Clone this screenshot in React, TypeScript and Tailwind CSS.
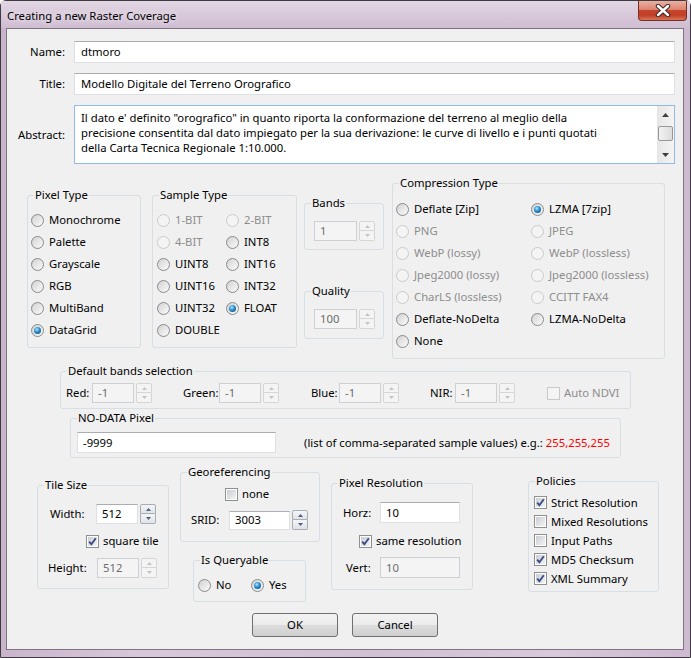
import React from 'react';

const FONT = "font-['Segoe_UI','Noto_Sans',sans-serif]";

function Radio({ label, checked = false, disabled = false }: { label: string; checked?: boolean; disabled?: boolean }) {
  return (
    <div className="flex items-center h-[22px] whitespace-nowrap">
      <span
        className={`w-[13px] h-[13px] shrink-0 rounded-full border flex items-center justify-center ${
          disabled ? 'border-[#cacaca] bg-[#f4f4f4]' : 'border-[#8a8a8a] bg-[linear-gradient(135deg,#d2d2d2,#fbfbfb)]'
        }`}
      >
        {checked && (
          <span className="w-[7px] h-[7px] rounded-full bg-[radial-gradient(circle_at_40%_35%,#a6e8ff_0%,#2a8bcc_45%,#0b3f72_100%)]" />
        )}
      </span>
      <span className={`ml-[5px] ${disabled ? 'text-[#8d8d8d]' : 'text-black'}`}>{label}</span>
    </div>
  );
}

function Check({ label, checked = false, disabled = false }: { label: string; checked?: boolean; disabled?: boolean }) {
  return (
    <div className="flex items-center whitespace-nowrap">
      <span
        className={`w-[13px] h-[13px] shrink-0 border p-[1px] ${
          disabled ? 'border-[#c9c9c9] bg-[#f4f4f4]' : 'border-[#8e8f8f] bg-white'
        }`}
      >
        <span
          className={`flex items-center justify-center w-full h-full ${
            disabled ? 'bg-[#f4f4f4]' : 'bg-[linear-gradient(135deg,#c9cdd2,#f3f3f4)]'
          }`}
        >
          {checked && (
            <svg width="9" height="9" viewBox="0 0 9 9">
              <path d="M1.2 4.6 L3.4 7.2 L7.8 1.3" fill="none" stroke="#3b4d85" strokeWidth="1.9" />
            </svg>
          )}
        </span>
      </span>
      <span className={`ml-[4px] ${disabled ? 'text-[#8d8d8d]' : 'text-black'}`}>{label}</span>
    </div>
  );
}

function Spin({ disabled = false }: { disabled?: boolean }) {
  const arrow = disabled ? '#c4c4c4' : '#4d6185';
  const half = disabled
    ? 'border-[#d6d6d6] bg-[#f4f4f4]'
    : 'border-[#a6adb6] bg-[linear-gradient(#f6f6f6,#dfe2e6)]';
  return (
    <div className="flex flex-col w-[16px] h-[20px] ml-[2px] shrink-0">
      <div className={`h-[10px] border rounded-t-[2px] flex items-center justify-center ${half}`}>
        <svg width="5" height="3" viewBox="0 0 5 3">
          <path d="M0 3 L2.5 0 L5 3Z" fill={arrow} />
        </svg>
      </div>
      <div className={`h-[10px] border border-t-0 rounded-b-[2px] flex items-center justify-center ${half}`}>
        <svg width="5" height="3" viewBox="0 0 5 3">
          <path d="M0 0 L2.5 3 L5 0Z" fill={arrow} />
        </svg>
      </div>
    </div>
  );
}

function Field({ value, disabled = false, className = '' }: { value: string; disabled?: boolean; className?: string }) {
  return (
    <div
      className={`border flex items-center pl-[5px] whitespace-nowrap overflow-hidden shrink-0 ${
        disabled
          ? 'border-[#cdd1d5] bg-[#f4f4f4] text-[#6d6d6d]'
          : 'border-[#dde0e5] border-t-[#abadb3] bg-white text-black'
      } ${className}`}
    >
      {value}
    </div>
  );
}

function Group({
  title,
  className,
  children,
}: {
  title: string;
  className: string;
  children?: React.ReactNode;
}) {
  return (
    <fieldset className={`border border-[#d5dfe5] rounded-[3px] min-w-0 shrink-0 ${className}`}>
      <legend className="ml-[6px] px-[1px] leading-[16px] text-black">{title}</legend>
      {children}
    </fieldset>
  );
}

export default function App() {
  return (
    <div className={`${FONT} text-[11.3px] leading-[16px] w-[691px] h-[658px] overflow-hidden`}>
      <div className="w-[691px] h-[658px] border border-[#3d3a40] rounded-t-[6px] flex flex-col bg-[linear-gradient(90deg,#c9b4cc_0%,#d8c8da_20%,#d2c0d4_55%,#d9c9db_80%,#cdb9d0_100%)]">
        {/* Title bar */}
        <div className="h-[27px] flex items-start justify-between bg-[linear-gradient(180deg,#e2d7e4_0%,#d6c6d8_60%,#cfbdd2_100%)]">
          <div className="mt-[7px] ml-[6px] leading-[16px] text-black [text-shadow:0_0_6px_#ffffff]">
            Creating a new Raster Coverage
          </div>
          <div className="w-[49px] h-[20px] mr-[3px] rounded-b-[4px] border border-t-0 border-[#7a2e22] flex items-center justify-center bg-[linear-gradient(180deg,#eab0a2_0%,#dc8470_45%,#c6442b_50%,#c13f26_75%,#d87656_100%)]">
            <svg width="16" height="13" viewBox="0 0 16 13">
              <path d="M3 2 L13 11 M13 2 L3 11" stroke="#3a2a2a" strokeWidth="4.4" strokeLinecap="round" />
              <path d="M3 2 L13 11 M13 2 L3 11" stroke="#ffffff" strokeWidth="2.4" strokeLinecap="round" />
            </svg>
          </div>
        </div>

        {/* Client area */}
        <div className="ml-[5px] mr-[6px] mb-[7px] flex-1 border border-[#7d7480] bg-[#f0f0f0] flex flex-col">
          {/* Name / Title / Abstract */}
          <div className="grid grid-cols-[58px_1fr] gap-x-[9px] gap-y-[10px] pt-[12px] pr-[8px] items-center">
            <div className="text-right">Name:</div>
            <Field value="dtmoro" className="h-[22px] pl-[6px]" />
            <div className="text-right">Title:</div>
            <Field value="Modello Digitale del Terreno Orografico" className="h-[22px] pl-[6px]" />
            <div className="text-right">Abstract:</div>
            <div className="h-[59px] border border-[#8fbbe6] bg-white flex">
              <div className="flex-1 min-w-0 pl-[6px] pt-[4px] leading-[15px] whitespace-nowrap overflow-hidden">
                <div>Il dato e' definito "orografico" in quanto riporta la conformazione del terreno al meglio della</div>
                <div>precisione consentita dal dato impiegato per la sua derivazione: le curve di livello e i punti quotati</div>
                <div>della Carta Tecnica Regionale 1:10.000.</div>
              </div>
              <div className="w-[17px] flex flex-col items-center bg-[linear-gradient(90deg,#e6e6e6,#f4f4f4)]">
                <div className="h-[17px] flex items-center justify-center">
                  <svg width="7" height="4" viewBox="0 0 7 4">
                    <path d="M0 4 L3.5 0 L7 4Z" fill="#404040" />
                  </svg>
                </div>
                <div className="flex-1 w-full flex items-center justify-center">
                  <div className="w-[15px] h-[15px] mt-[-3px] rounded-[2px] border border-[#979797] bg-[linear-gradient(90deg,#f2f2f2,#dcdcdc)]" />
                </div>
                <div className="h-[17px] flex items-center justify-center">
                  <svg width="7" height="4" viewBox="0 0 7 4">
                    <path d="M0 0 L3.5 4 L7 0Z" fill="#404040" />
                  </svg>
                </div>
              </div>
            </div>
          </div>

          {/* Types row */}
          <div className="flex items-start mt-[11px] pl-[20px]">
            <Group title="Pixel Type" className="w-[114px] h-[161px] mt-[12px]">
              <div className="pt-[6px] pl-[3px]">
                <Radio label="Monochrome" />
                <Radio label="Palette" />
                <Radio label="Grayscale" />
                <Radio label="RGB" />
                <Radio label="MultiBand" />
                <Radio label="DataGrid" checked />
              </div>
            </Group>
            <Group title="Sample Type" className="w-[145px] h-[161px] mt-[12px] ml-[11px]">
              <div className="pt-[6px] pl-[4px] grid grid-cols-[69px_auto]">
                <Radio label="1-BIT" disabled />
                <Radio label="2-BIT" disabled />
                <Radio label="4-BIT" disabled />
                <Radio label="INT8" />
                <Radio label="UINT8" />
                <Radio label="INT16" />
                <Radio label="UINT16" />
                <Radio label="INT32" />
                <Radio label="UINT32" />
                <Radio label="FLOAT" checked />
                <Radio label="DOUBLE" />
              </div>
            </Group>
            <div className="flex flex-col ml-[7px] mt-[20px]">
              <Group title="Bands" className="w-[80px] h-[55px]">
                <div className="flex items-start pt-[10px] pl-[9px]">
                  <Field value="1" disabled className="w-[43px] h-[20px]" />
                  <Spin disabled />
                </div>
              </Group>
              <Group title="Quality" className="w-[80px] h-[56px] mt-[33px]">
                <div className="flex items-start pt-[10px] pl-[9px]">
                  <Field value="100" disabled className="w-[43px] h-[20px]" />
                  <Spin disabled />
                </div>
              </Group>
            </div>
            <Group title="Compression Type" className="w-[273px] h-[184px] ml-[8px]">
              <div className="pt-[7px] pl-[3px] grid grid-cols-[135px_auto]">
                <Radio label="Deflate [Zip]" />
                <Radio label="LZMA [7zip]" checked />
                <Radio label="PNG" disabled />
                <Radio label="JPEG" disabled />
                <Radio label="WebP (lossy)" disabled />
                <Radio label="WebP (lossless)" disabled />
                <Radio label="Jpeg2000 (lossy)" disabled />
                <Radio label="Jpeg2000 (lossless)" disabled />
                <Radio label="CharLS (lossless)" disabled />
                <Radio label="CCITT FAX4" disabled />
                <Radio label="Deflate-NoDelta" />
                <Radio label="LZMA-NoDelta" />
                <Radio label="None" />
              </div>
            </Group>
          </div>

          {/* Default bands selection */}
          <Group title="Default bands selection" className="w-[571px] h-[46px] mt-[4px] ml-[53px]">
            <div className="flex items-center pt-[4px] pl-[5px]">
              <div className="w-[117px] flex items-center">
                <span className="w-[26px] shrink-0">Red:</span>
                <Field value="-1" disabled className="w-[42px] h-[20px]" />
                <Spin disabled />
              </div>
              <div className="w-[128px] flex items-center">
                <span className="w-[36px] shrink-0">Green:</span>
                <Field value="-1" disabled className="w-[42px] h-[20px]" />
                <Spin disabled />
              </div>
              <div className="w-[119px] flex items-center">
                <span className="w-[28px] shrink-0">Blue:</span>
                <Field value="-1" disabled className="w-[42px] h-[20px]" />
                <Spin disabled />
              </div>
              <div className="w-[117px] flex items-center">
                <span className="w-[25px] shrink-0">NIR:</span>
                <Field value="-1" disabled className="w-[42px] h-[20px]" />
                <Spin disabled />
              </div>
              <Check label="Auto NDVI" disabled />
            </div>
          </Group>

          {/* NO-DATA */}
          <Group title="NO-DATA Pixel" className="w-[551px] h-[48px] mt-[1px] ml-[63px]">
            <div className="flex items-center pt-[6px] pl-[6px]">
              <Field value="-9999" className="w-[199px] h-[21px]" />
              <span className="ml-[28px] whitespace-nowrap">
                (list of comma-separated sample values) e.g.: <span className="text-[#ff0000]">255,255,255</span>
              </span>
            </div>
          </Group>

          {/* Bottom groups */}
          <div className="flex items-start mt-[6px] pl-[30px]">
            <Group title="Tile Size" className="w-[132px] h-[112px] mt-[13px]">
              <div className="pt-[11px]">
                <div className="flex items-center pl-[12px] h-[20px]">
                  <span className="w-[46px] shrink-0">Width:</span>
                  <Field value="512" className="w-[42px] h-[20px]" />
                  <Spin />
                </div>
                <div className="flex items-center pl-[48px] h-[20px] mt-[7px]">
                  <Check label="square tile" checked />
                </div>
                <div className="flex items-center pl-[10px] h-[20px] mt-[7px]">
                  <span className="w-[49px] shrink-0">Height:</span>
                  <Field value="512" disabled className="w-[42px] h-[20px]" />
                  <Spin disabled />
                </div>
              </div>
            </Group>
            <div className="flex flex-col w-[140px] ml-[11px]">
              <Group title="Georeferencing" className="w-[140px] h-[78px]">
                <div className="pt-[6px]">
                  <div className="flex items-center pl-[44px] h-[16px]">
                    <Check label="none" />
                  </div>
                  <div className="flex items-center pl-[10px] h-[20px] mt-[8px]">
                    <span className="w-[38px] shrink-0">SRID:</span>
                    <Field value="3003" className="w-[61px] h-[19px]" />
                    <Spin />
                  </div>
                </div>
              </Group>
              <Group title="Is Queryable" className="w-[113px] h-[50px] mt-[10px] ml-[13px]">
                <div className="flex items-center pt-[6px] pl-[4px]">
                  <div className="w-[53px]">
                    <Radio label="No" />
                  </div>
                  <Radio label="Yes" checked />
                </div>
              </Group>
            </div>
            <Group title="Pixel Resolution" className="w-[142px] h-[115px] mt-[11px] ml-[11px]">
              <div className="pt-[11px]">
                <div className="flex items-center pl-[11px]">
                  <span className="w-[37px] shrink-0">Horz:</span>
                  <Field value="10" className="w-[80px] h-[21px]" />
                </div>
                <div className="flex items-center pl-[27px] h-[20px] mt-[8px]">
                  <Check label="same resolution" checked />
                </div>
                <div className="flex items-center pl-[14px] mt-[6px]">
                  <span className="w-[34px] shrink-0">Vert:</span>
                  <Field value="10" disabled className="w-[80px] h-[21px]" />
                </div>
              </div>
            </Group>
            <Group title="Policies" className="w-[131px] h-[119px] mt-[9px] ml-[55px]">
              <div className="pt-[4px] pl-[5px] flex flex-col">
                <div className="h-[19px] flex items-center">
                  <Check label="Strict Resolution" checked />
                </div>
                <div className="h-[19px] flex items-center">
                  <Check label="Mixed Resolutions" />
                </div>
                <div className="h-[19px] flex items-center">
                  <Check label="Input Paths" />
                </div>
                <div className="h-[19px] flex items-center">
                  <Check label="MD5 Checksum" checked />
                </div>
                <div className="h-[19px] flex items-center">
                  <Check label="XML Summary" checked />
                </div>
              </div>
            </Group>
          </div>

          {/* Buttons */}
          <div className="flex justify-center gap-[14px] mt-[11px]">
            <button className="w-[86px] h-[24px] rounded-[3px] border border-[#707070] bg-[linear-gradient(180deg,#f3f3f3_0%,#ebebeb_49%,#dddddd_50%,#cfcfcf_100%)] text-black">
              OK
            </button>
            <button className="w-[86px] h-[24px] rounded-[3px] border border-[#707070] bg-[linear-gradient(180deg,#f3f3f3_0%,#ebebeb_49%,#dddddd_50%,#cfcfcf_100%)] text-black">
              Cancel
            </button>
          </div>
        </div>
      </div>
    </div>
  );
}
